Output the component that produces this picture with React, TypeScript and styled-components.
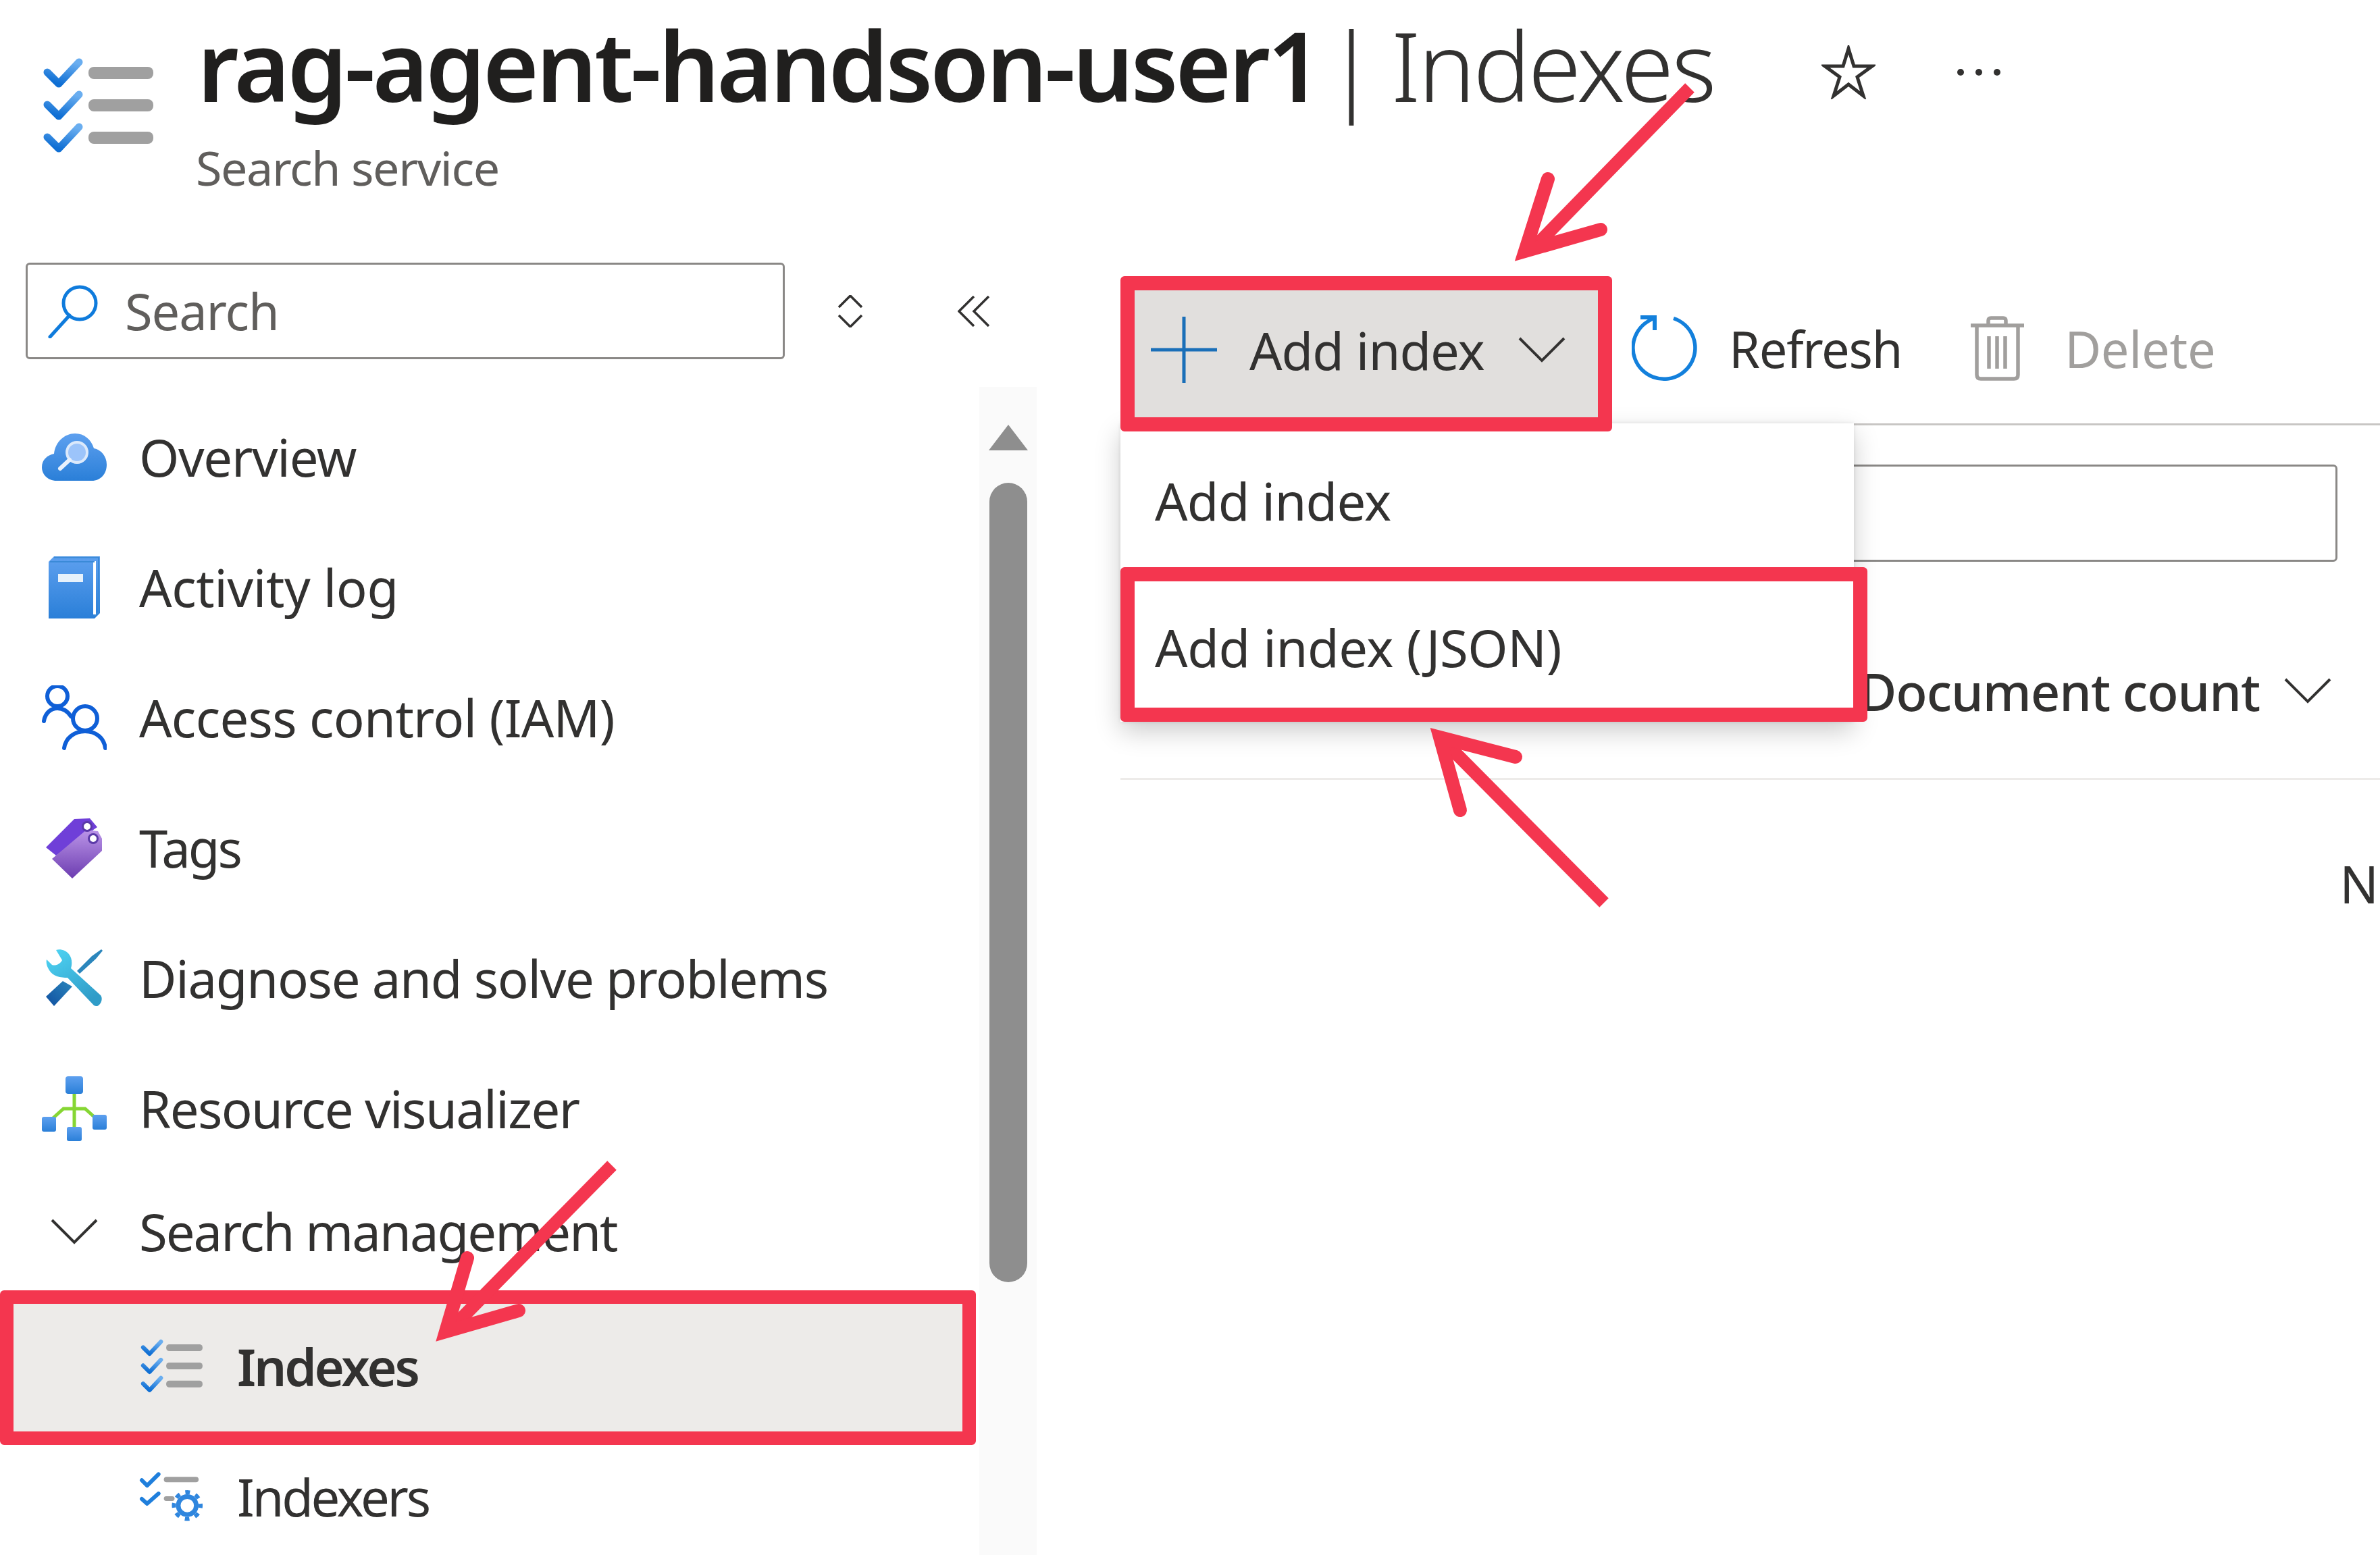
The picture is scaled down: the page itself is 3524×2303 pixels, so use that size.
import React from "react";
import styled, { createGlobalStyle } from "styled-components";

const Global = createGlobalStyle`
  html, body { margin: 0; padding: 0; background: #fff; }
  body { font-family: "Noto Sans", "Open Sans", Arial, sans-serif; color: #323130; }
`;

const RED = "#f4364f";

const Page = styled.div`
  position: relative;
  width: 3524px;
  height: 2303px;
  overflow: hidden;
  background: #fff;
`;

const Header = styled.header`
  display: flex;
  align-items: flex-start;
  height: 389px;
  padding: 85px 0 0 63px;
  box-sizing: border-box;
`;

const TitleBlock = styled.div`
  margin-left: 63px;
  margin-top: -87px;
  display: flex;
  flex-direction: column;
`;

const Title = styled.h1`
  margin: 0;
  font-size: 142px;
  line-height: 196px;
  font-weight: 600;
  color: #201f1e;
  white-space: nowrap;
  letter-spacing: -4.2px;
  word-spacing: -24px;
`;

const TitleLight = styled.span`
  font-weight: 300;
  color: #323130;
  letter-spacing: -3.5px;
  word-spacing: -10px;
`;

const Subtitle = styled.div`
  font-size: 70px;
  line-height: 80px;
  color: #605e5c;
  margin-top: 14px;
  margin-left: -2px;
  letter-spacing: -1.4px;
`;

const HeaderIcons = styled.div`
  display: flex;
  align-items: center;
  gap: 120px;
  margin-left: 159px;
  margin-top: -18px;
`;

const Body = styled.div`
  display: flex;
  align-items: flex-start;
`;

const Sidebar = styled.aside`
  width: 1535px;
  flex: none;
`;

const SearchRow = styled.div`
  display: flex;
  align-items: center;
  height: 143px;
  padding-left: 38px;
  margin-bottom: 41px;
`;

const SearchBox = styled.div`
  display: flex;
  align-items: center;
  width: 1124px;
  height: 143px;
  box-sizing: border-box;
  border: 3px solid #8a8886;
  border-radius: 6px;
  padding-left: 30px;
  gap: 38px;
  font-size: 74px;
  color: #605e5c;
  letter-spacing: -1.1px;
`;

const SortIcon = styled.span`
  display: flex;
  margin-left: 78px;
`;

const CollapseIcon = styled.span`
  display: flex;
  margin-left: 140px;
`;

const NavArea = styled.div`
  display: flex;
  height: 1730px;
`;

const NavList = styled.nav`
  width: 1445px;
  padding-top: 9px;
  flex: none;
`;

const NavRow = styled.div<{ $h?: number; $indent?: boolean; $active?: boolean; $ls?: number }>`
  display: flex;
  align-items: center;
  gap: ${(p) => (p.$indent ? 49 : 48)}px;
  box-sizing: border-box;
  height: ${(p) => p.$h ?? 193}px;
  padding-left: ${(p) => (p.$active ? 186 : p.$indent ? 206 : 62)}px;
  padding-bottom: 4px;
  font-size: 76px;
  letter-spacing: ${(p) => p.$ls ?? -1.3}px;
  white-space: nowrap;
  color: #323130;
  background: ${(p) => (p.$active ? "#edebe9" : "transparent")};
  border: ${(p) => (p.$active ? `20px solid ${RED}` : "none")};
  border-radius: ${(p) => (p.$active ? "6px" : "0")};
  font-weight: ${(p) => (p.$active ? 600 : 400)};
`;

const IconSlot = styled.span`
  display: flex;
  align-items: center;
  justify-content: center;
  width: 96px;
  flex: none;
`;

const ScrollTrack = styled.div`
  margin-left: 5px;
  width: 85px;
  height: 100%;
  background: #fafafa;
  display: flex;
  flex-direction: column;
  align-items: center;
  padding-top: 56px;
  box-sizing: border-box;
`;

const ScrollThumb = styled.div`
  width: 56px;
  height: 1184px;
  border-radius: 28px;
  background: #8e8e8e;
  margin-top: 48px;
`;

const Main = styled.main`
  position: relative;
  flex: 1;
  margin-left: 124px;
  margin-top: 20px;
`;

const Toolbar = styled.div`
  display: flex;
  align-items: flex-start;
  height: 218px;
  border-bottom: 3px solid #c8c6c4;
  box-sizing: content-box;
`;

const AddButton = styled.div`
  position: relative;
  z-index: 2;
  display: flex;
  align-items: center;
  box-sizing: border-box;
  flex: none;
  width: 728px;
  height: 230px;
  border: 21px solid ${RED};
  border-radius: 6px;
  background: #e1dfdd;
  padding: 0 0 12px 24px;
  font-size: 76px;
  letter-spacing: -1px;
`;

const AddLabel = styled.span`
  margin-left: 48px;
  color: #323130;
`;

const AddChevron = styled.span`
  display: flex;
  margin-left: 50px;
`;

const ToolAction = styled.div<{ $disabled?: boolean }>`
  display: flex;
  align-items: center;
  height: 218px;
  box-sizing: border-box;
  padding-bottom: 4px;
  gap: 46px;
  font-size: 74px;
  letter-spacing: -1.3px;
  color: ${(p) => (p.$disabled ? "#a19f9d" : "#323130")};
`;

const RefreshAction = styled(ToolAction)`
  margin-left: 29px;
`;

const DeleteAction = styled(ToolAction)`
  margin-left: 102px;
  gap: 60px;
  letter-spacing: -0.3px;
`;

const FilterBox = styled.div`
  margin-top: 58px;
  width: 1802px;
  height: 144px;
  box-sizing: border-box;
  border: 3px solid #8a8886;
  border-radius: 6px;
`;

const TableHead = styled.div`
  display: flex;
  align-items: center;
  justify-content: flex-end;
  height: 323px;
  box-sizing: border-box;
  padding: 62px 72px 0 0;
  border-bottom: 3px solid #edebe9;
  font-size: 76px;
  font-weight: 500;
  letter-spacing: -1px;
  color: #323130;
  gap: 36px;
`;

const EmptyRow = styled.div`
  display: flex;
  justify-content: flex-end;
  padding: 104px 2px 0 0;
  font-size: 76px;
  line-height: 100px;
  color: #323130;
`;

const Menu = styled.div`
  position: absolute;
  z-index: 1;
  left: 0;
  top: 218px;
  width: 1086px;
  height: 442px;
  background: #fff;
  box-shadow: 0 14px 36px rgba(0, 0, 0, 0.2), 0 0 6px rgba(0, 0, 0, 0.1);
  display: flex;
  flex-direction: column;
`;

const MenuItem = styled.div<{ $outlined?: boolean }>`
  display: flex;
  align-items: center;
  box-sizing: border-box;
  font-size: 76px;
  letter-spacing: ${(p) => (p.$outlined ? -0.4 : -0.8)}px;
  color: #323130;
  white-space: nowrap;
  height: ${(p) => (p.$outlined ? 229 : 213)}px;
  padding-left: ${(p) => (p.$outlined ? 30 : 51)}px;
  padding-top: ${(p) => (p.$outlined ? 8 : 16)}px;
  background: #fff;
  width: ${(p) => (p.$outlined ? "1106px" : "auto")};
  border: ${(p) => (p.$outlined ? `21px solid ${RED}` : "none")};
  border-radius: ${(p) => (p.$outlined ? "6px" : "0")};
`;

const Overlay = styled.svg`
  position: absolute;
  left: 0;
  top: 0;
  z-index: 5;
  pointer-events: none;
`;

/* ---------- icons ---------- */

const Defs = () => (
  <svg width="0" height="0" style={{ position: "absolute" }}>
    <defs>
      <linearGradient id="blueV" x1="0" y1="0" x2="0" y2="1">
        <stop offset="0" stopColor="#5ea0ef" />
        <stop offset="1" stopColor="#2a7fd8" />
      </linearGradient>
      <linearGradient id="checkG" x1="0.8" y1="0" x2="0.4" y2="1">
        <stop offset="0" stopColor="#6aaef0" />
        <stop offset="1" stopColor="#0f6fd4" />
      </linearGradient>
      <linearGradient id="tagG" x1="0" y1="0" x2="0" y2="1">
        <stop offset="0" stopColor="#bb95e8" />
        <stop offset="1" stopColor="#6c3cb0" />
      </linearGradient>
      <linearGradient id="wrenchG" x1="0" y1="0" x2="0.6" y2="1">
        <stop offset="0" stopColor="#50d6f5" />
        <stop offset="1" stopColor="#2f9cc8" />
      </linearGradient>
      <linearGradient id="handleG" x1="1" y1="0" x2="0" y2="1">
        <stop offset="0" stopColor="#2b86bc" />
        <stop offset="1" stopColor="#0f4fa0" />
      </linearGradient>
    </defs>
  </svg>
);

const ChecklistIcon = ({ w, h }: { w: number; h: number }) => (
  <svg width={w} height={h} viewBox="0 0 166 144">
    {[0, 48, 96].map((dy) => (
      <g key={dy}>
        <path
          d={`M7 ${22 + dy} L24 ${39 + dy} L54 ${7 + dy}`}
          fill="none"
          stroke="url(#checkG)"
          strokeWidth="11"
          strokeLinecap="round"
          strokeLinejoin="round"
        />
        <rect x="68" y={14 + dy} width="96" height="18" rx="8" fill="#a0a0a0" />
      </g>
    ))}
  </svg>
);

const IndexersIcon = () => (
  <svg width="97" height="75" viewBox="0 0 97 75">
    <g fill="none" stroke="#1f7fdc" strokeWidth="6" strokeLinecap="round" strokeLinejoin="round">
      <path d="M4 13 L12 21 L29 4" />
      <path d="M4 41 L12 48 L29 33" />
    </g>
    <rect x="37" y="8" width="52" height="8" rx="4" fill="#a0a0a0" />
    <rect x="37" y="37" width="16" height="7" rx="3.5" fill="#a0a0a0" />
    <circle cx="72" cy="51" r="13.5" fill="#fff" stroke="#2f86de" strokeWidth="7" />
    <circle cx="72" cy="51" r="20" fill="none" stroke="#2f86de" strokeWidth="6" strokeDasharray="7 8.7" strokeDashoffset="3.5" />
  </svg>
);

const OverviewIcon = () => (
  <svg width="96" height="70" viewBox="0 0 96 70">
    <path
      d="M22 70 C8 70 0 60 0 50 C0 39 8 32 18 30 C20 12 34 0 49 0 C63 0 73 9 77 22 C88 24 96 34 96 46 C96 60 87 70 74 70 Z"
      fill="url(#blueV)"
    />
    <circle cx="52" cy="28" r="15" fill="#9cc4fa" stroke="#dbe9fb" strokeWidth="4" />
    <path d="M41 39 L27 52" stroke="#e8f1fc" strokeWidth="6" strokeLinecap="round" />
  </svg>
);

const ActivityIcon = () => (
  <svg width="76" height="92" viewBox="0 0 76 92">
    <path d="M8 0 H76 V84 L68 92 H0 V8 Z" fill="url(#blueV)" />
    <path d="M8 1.5 H74 V83 L68 88" fill="none" stroke="#3a8ad8" strokeWidth="2" />
    <path d="M68 7 V86" stroke="#fff" strokeWidth="4" />
    <path d="M2 8 H68" stroke="#3a8ad8" strokeWidth="2" />
    <rect x="14" y="26" width="37" height="12" fill="#e6f1fb" />
  </svg>
);

const AccessIcon = () => (
  <svg width="96" height="96" viewBox="0 0 96 96" fill="none" stroke="#0f5fd7" strokeWidth="6" strokeLinecap="round">
    <circle cx="23" cy="16" r="15" />
    <path d="M3 53 C5 40 14 34 23 34 C32 34 38 38 43 46" />
    <circle cx="64" cy="49" r="18" />
    <path d="M33 93 C35 78 48 68 64 68 C80 68 92 78 94 93" />
  </svg>
);

const TagsIcon = () => (
  <svg width="84" height="90" viewBox="0 0 84 90">
    <path d="M0 44 L42 2 L65 1 L76 14 L15 56 Z" fill="#6f3fd8" />
    <path d="M9 61 L60 18 L77 20 L83 31 V49 L39 90 Z" fill="url(#tagG)" />
    <circle cx="61" cy="13" r="8" fill="#5b3aa8" />
    <circle cx="61" cy="13" r="5" fill="#fff" />
    <circle cx="70" cy="31" r="8" fill="#5b3aa8" />
    <circle cx="70" cy="31" r="5" fill="#fff" />
  </svg>
);

const DiagnoseIcon = () => (
  <svg width="84" height="89" viewBox="0 0 84 89">
    <path d="M82 2 L84 4 L74 16 L50 38 L46 34 L68 12 Z" fill="#2b86bc" />
    <path d="M25 49 L39 57 L12 86 L0 72 Z" fill="url(#handleG)" />
    <path
      d="M15 3 C22 1 30 4 34 9 C39 15 39 24 37 30 L81 70 C86 76 79 90 71 85 L32 44 C22 44 10 42 5 33 C1 27 0 22 1 17 L9 25 C14 27 21 24 24 18 Z"
      fill="url(#wrenchG)"
    />
  </svg>
);

const ResourceIcon = () => (
  <svg width="96" height="96" viewBox="0 0 96 96">
    <path d="M48 24 V78 M12 66 L32 48 H64 L84 66" fill="none" stroke="#86d633" strokeWidth="5" />
    <rect x="35" y="0" width="26" height="26" rx="4" fill="url(#blueV)" />
    <rect x="0" y="60" width="21" height="22" rx="3" fill="url(#blueV)" />
    <rect x="75" y="57" width="21" height="22" rx="3" fill="url(#blueV)" />
    <rect x="37" y="75" width="22" height="21" rx="3" fill="url(#blueV)" />
  </svg>
);

const SearchGlass = () => (
  <svg width="76" height="80" viewBox="0 0 76 80" fill="none" stroke="#0f7bdc" strokeWidth="5">
    <circle cx="47" cy="28" r="24" />
    <path d="M32 46 L3 78" strokeLinecap="round" />
  </svg>
);

const Chevron = ({ w = 70, h = 38, sw = 4 }: { w?: number; h?: number; sw?: number }) => (
  <svg width={w} height={h} viewBox={`0 0 ${w} ${h}`} fill="none" stroke="#323130" strokeWidth={sw}>
    <path d={`M2 2 L${w / 2} ${h - 3} L${w - 2} 2`} />
  </svg>
);

const PlusIcon = () => (
  <svg width="98" height="98" viewBox="0 0 98 98" stroke="#1a6fb8" strokeWidth="5">
    <path d="M49 0 V98 M0 49 H98" />
  </svg>
);

const RefreshIcon = () => (
  <svg width="98" height="98" viewBox="0 0 98 98" fill="none" stroke="#1380dc" strokeWidth="5.5">
    <path d="M62 4.5 A46 46 0 1 1 24 9 L34 3" />
    <path d="M13 3 H34 V22" strokeWidth="6" />
  </svg>
);

const TrashIcon = () => (
  <svg width="79" height="96" viewBox="0 0 79 96" fill="none" stroke="#a19f9d" strokeWidth="5.5">
    <path d="M0 14 H79" />
    <path d="M26 14 V7 Q26 3 30 3 H48 Q52 3 52 7 V14" />
    <path d="M9 14 V87 Q9 93 15 93 H64 Q70 93 70 87 V14" />
    <path d="M27 30 V78 M39 30 V78 M51 30 V78" />
  </svg>
);

const StarIcon = () => (
  <svg width="80" height="80" viewBox="0 0 80 80" fill="none" stroke="#323130" strokeWidth="5" strokeLinejoin="miter" strokeMiterlimit="10">
    <path d="M40 5 L48 31 L75 31 L53 47 L62 75 L40 58 L18 75 L27 47 L5 31 L32 31 Z" />
  </svg>
);

const MoreIcon = () => (
  <svg width="66" height="12" viewBox="0 0 66 12" fill="#323130">
    <circle cx="6" cy="6" r="5" />
    <circle cx="33" cy="6" r="5" />
    <circle cx="60" cy="6" r="5" />
  </svg>
);

const SortGlyph = () => (
  <svg width="38" height="48" viewBox="0 0 38 48" fill="none" stroke="#323130" strokeWidth="3.5">
    <path d="M2 18 L19 1 L36 18 M2 30 L19 47 L36 30" />
  </svg>
);

const CollapseGlyph = () => (
  <svg width="48" height="46" viewBox="0 0 48 46" fill="none" stroke="#323130" strokeWidth="3.5">
    <path d="M24 1 L2 23 L24 45 M46 1 L24 23 L46 45" />
  </svg>
);

const ScrollUp = () => (
  <svg width="58" height="38" viewBox="0 0 58 38" fill="#8e8e8e" style={{ flex: "none" }}>
    <path d="M29 0 L58 38 H0 Z" />
  </svg>
);

const Arrows = () => (
  <Overlay width="3524" height="2303" viewBox="0 0 3524 2303">
    <g fill="none" stroke={RED} strokeWidth="19" strokeLinejoin="miter" strokeMiterlimit="8">
      <path d="M2502 130 L2270 368" />
      <path d="M2292 265 L2258 372 L2370 340" strokeLinecap="round" strokeWidth="20" />
      <path d="M2375 1337 L2138 1098" />
      <path d="M2244 1121 L2132 1092 L2162 1200" strokeLinecap="round" strokeWidth="20" />
      <path d="M906 1726 L666 1970" />
      <path d="M692 1863 L660 1972 L768 1941" strokeLinecap="round" strokeWidth="20" />
    </g>
  </Overlay>
);

export default function App() {
  return (
    <Page>
      <Global />
      <Defs />
      <Header>
        <ChecklistIcon w={166} h={144} />
        <TitleBlock>
          <Title>
            rag-agent-handson-user1 <TitleLight>| Indexes</TitleLight>
          </Title>
          <Subtitle>Search service</Subtitle>
        </TitleBlock>
        <HeaderIcons>
          <StarIcon />
          <MoreIcon />
        </HeaderIcons>
      </Header>
      <Body>
        <Sidebar>
          <SearchRow>
            <SearchBox>
              <SearchGlass />
              <span>Search</span>
            </SearchBox>
            <SortIcon>
              <SortGlyph />
            </SortIcon>
            <CollapseIcon>
              <CollapseGlyph />
            </CollapseIcon>
          </SearchRow>
          <NavArea>
            <NavList>
              <NavRow>
                <IconSlot><OverviewIcon /></IconSlot>
                Overview
              </NavRow>
              <NavRow $ls={-0.4}>
                <IconSlot><ActivityIcon /></IconSlot>
                Activity log
              </NavRow>
              <NavRow $ls={-0.7}>
                <IconSlot><AccessIcon /></IconSlot>
                Access control (IAM)
              </NavRow>
              <NavRow $ls={-3}>
                <IconSlot><TagsIcon /></IconSlot>
                Tags
              </NavRow>
              <NavRow>
                <IconSlot><DiagnoseIcon /></IconSlot>
                Diagnose and solve problems
              </NavRow>
              <NavRow $ls={-1.6}>
                <IconSlot><ResourceIcon /></IconSlot>
                Resource visualizer
              </NavRow>
              <NavRow $h={171} $ls={-2}>
                <IconSlot><Chevron /></IconSlot>
                Search management
              </NavRow>
              <NavRow $h={229} $indent $active $ls={-3.2}>
                <IconSlot><ChecklistIcon w={93} h={81} /></IconSlot>
                Indexes
              </NavRow>
              <NavRow $h={156} $indent $ls={-3.3}>
                <IconSlot><IndexersIcon /></IconSlot>
                Indexers
              </NavRow>
            </NavList>
            <ScrollTrack>
              <ScrollUp />
              <ScrollThumb />
            </ScrollTrack>
          </NavArea>
        </Sidebar>
        <Main>
          <Toolbar>
            <AddButton>
              <PlusIcon />
              <AddLabel>Add index</AddLabel>
              <AddChevron><Chevron /></AddChevron>
            </AddButton>
            <RefreshAction>
              <RefreshIcon />
              Refresh
            </RefreshAction>
            <DeleteAction $disabled>
              <TrashIcon />
              Delete
            </DeleteAction>
          </Toolbar>
          <Menu>
            <MenuItem>Add index</MenuItem>
            <MenuItem $outlined>Add index (JSON)</MenuItem>
          </Menu>
          <FilterBox />
          <TableHead>
            Document count
            <Chevron />
          </TableHead>
          <EmptyRow>N</EmptyRow>
        </Main>
      </Body>
      <Arrows />
    </Page>
  );
}
